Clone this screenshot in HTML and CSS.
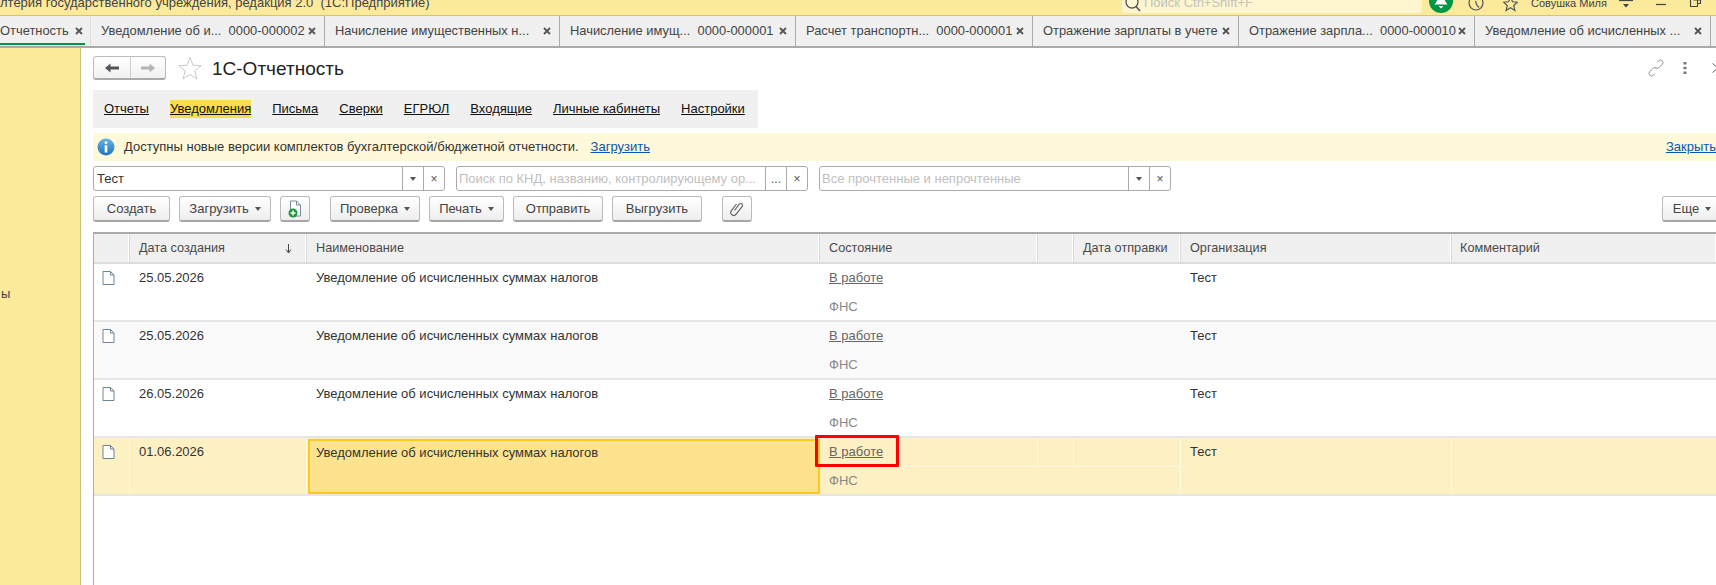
FILE: index.html
```html
<!DOCTYPE html>
<html lang="ru">
<head>
<meta charset="utf-8">
<title>1С-Отчетность</title>
<link rel="stylesheet" href="styles.css">
</head>
<body>
<div class="app">
  <header class="topbar">
    <div class="app-title">лтерия государственного учреждения, редакция 2.0&nbsp; (1С:Предприятие)</div>
    <div class="search">
      <svg class="search-ico" width="18" height="14" viewBox="0 0 18 14"><circle cx="7" cy="2" r="6" fill="none" stroke="#555" stroke-width="1.3"/><path d="M11 6.5l4 4.5" stroke="#555" stroke-width="1.6"/></svg>
      <span>Поиск Ctrl+Shift+F</span>
    </div>
    <svg class="bell" width="24" height="13" viewBox="0 0 24 13"><circle cx="12" cy="1" r="12" fill="#009646"/><path d="M12 -3c3 0 3.5 2 4 4l2.500 3.500h-13l2.500-3.500c.5-2 1-4 4-4z" fill="#fff"/><path d="M9.500 6h5l-2.500 2.500z" fill="#fff"/></svg>
    <svg class="clock" width="16" height="13" viewBox="0 0 16 13"><circle cx="8" cy="3" r="7" fill="none" stroke="#555" stroke-width="1.200"/><path d="M7.500 1l1.500 4.500 2 2" fill="none" stroke="#555" stroke-width="1.200"/></svg>
    <svg class="tstar" width="15" height="12" viewBox="0 0 15 12"><path d="M7.500-3l2 4.800 5 .4-3.800 3.300 1.200 5-4.400-2.700-4.400 2.700 1.200-5L.5 2.200l5-.4z" fill="none" stroke="#555" stroke-width="1.200"/></svg>
    <div class="user">Совушка Миля</div>
    <svg class="umenu" width="16" height="8" viewBox="0 0 16 8"><path d="M1 .5h14" stroke="#444" stroke-width="1.200"/><path d="M5 4h6L8 7.500z" fill="#444"/></svg>
    <svg class="mini" width="12" height="6" viewBox="0 0 12 6"><path d="M1 4.500h10" stroke="#444" stroke-width="1.200"/></svg>
    <svg class="rest" width="13" height="8" viewBox="0 0 13 8"><path d="M1.500 0v6.500h7V0M4.500 0h7v3.500H8.500" fill="none" stroke="#444" stroke-width="1.100"/></svg>
  </header>

  <nav class="tabs">
    <div class="tab tab-active t1"><span>Отчетность</span><svg class="x" width="8" height="8" viewBox="0 0 8 8"><path d="M1 1l6 6M7 1L1 7"/></svg></div>
    <div class="tab t2"><span>Уведомление об и...&nbsp; 0000-000002</span><svg class="x" width="8" height="8" viewBox="0 0 8 8"><path d="M1 1l6 6M7 1L1 7"/></svg></div>
    <div class="tab t3"><span>Начисление имущественных н...</span><svg class="x" width="8" height="8" viewBox="0 0 8 8"><path d="M1 1l6 6M7 1L1 7"/></svg></div>
    <div class="tab t4"><span>Начисление имущ...&nbsp; 0000-000001</span><svg class="x" width="8" height="8" viewBox="0 0 8 8"><path d="M1 1l6 6M7 1L1 7"/></svg></div>
    <div class="tab t5"><span>Расчет транспортн...&nbsp; 0000-000001</span><svg class="x" width="8" height="8" viewBox="0 0 8 8"><path d="M1 1l6 6M7 1L1 7"/></svg></div>
    <div class="tab t6"><span>Отражение зарплаты в учете</span><svg class="x" width="8" height="8" viewBox="0 0 8 8"><path d="M1 1l6 6M7 1L1 7"/></svg></div>
    <div class="tab t7"><span>Отражение зарпла...&nbsp; 0000-000010</span><svg class="x" width="8" height="8" viewBox="0 0 8 8"><path d="M1 1l6 6M7 1L1 7"/></svg></div>
    <div class="tab t8"><span>Уведомление об исчисленных ...</span><svg class="x" width="8" height="8" viewBox="0 0 8 8"><path d="M1 1l6 6M7 1L1 7"/></svg></div>
  </nav>

  <div class="main">
    <aside class="side"><span class="side-item">ы</span></aside>
    <section class="content">
      <div class="head">
        <div class="navbtns">
          <button class="navbtn"><svg width="14" height="10" viewBox="0 0 14 10"><path d="M0 5l5.500-4.500V3.500H14v3H5.500v3z" fill="#555"/></svg></button>
          <button class="navbtn"><svg width="14" height="10" viewBox="0 0 14 10"><path d="M14 5L8.500.5V3.500H0v3h8.500v3z" fill="#b4b4b4"/></svg></button>
        </div>
        <svg class="star" width="24" height="24" viewBox="0 0 24 24"><path d="M12 1.500l3 7.700 8.200.5-6.400 5.200 2.100 8L12 18.500 5.100 22.900l2.100-8L.8 9.700 9 9.200z" fill="none" stroke="#c8c8c8"/></svg>
        <h1 class="title">1С-Отчетность</h1>
        <div class="head-tools">
          <svg width="16" height="18" viewBox="0 0 17 20"><path d="M10 3.500l1.500-1.500a2.800 2.800 0 0 1 4 4l-3.500 3.500a2.800 2.800 0 0 1-4 0M7 16.500L5.500 18a2.800 2.800 0 0 1-4-4L5 10.500a2.800 2.800 0 0 1 4 0" fill="none" stroke="#888" stroke-width="1"/></svg>
          <svg class="dots" width="4" height="12" viewBox="0 0 4 12"><path d="M.5 0h3v2.500h-3zM.5 4.700h3v2.500h-3zM.5 9.400h3v2.500h-3z" fill="#777"/></svg>
          <svg class="chev" width="6" height="10" viewBox="0 0 6 10"><path d="M.5.500L6 5 .5 9.500" fill="none" stroke="#666"/></svg>
        </div>
      </div>

      <div class="menu">
        <a class="menu-item">Отчеты</a>
        <a class="menu-item menu-on">Уведомления</a>
        <a class="menu-item">Письма</a>
        <a class="menu-item">Сверки</a>
        <a class="menu-item">ЕГРЮЛ</a>
        <a class="menu-item">Входящие</a>
        <a class="menu-item">Личные кабинеты</a>
        <a class="menu-item">Настройки</a>
      </div>

      <div class="notice">
        <svg class="info" width="18" height="18" viewBox="0 0 18 18"><defs><linearGradient id="ig" x1="0" y1="0" x2="0" y2="1"><stop offset="0" stop-color="#6cb2e4"/><stop offset="1" stop-color="#1f74bb"/></linearGradient></defs><circle cx="9" cy="9" r="8.500" fill="url(#ig)"/><path d="M7.700 3.500h2.600v2.300H7.700zM7.700 7.200h2.600v7.300H7.700z" fill="#fff"/></svg>
        <span class="notice-text">Доступны новые версии комплектов бухгалтерской/бюджетной отчетности.</span>
        <a class="blue-link load">Загрузить</a>
        <a class="blue-link close">Закрыть</a>
      </div>

      <div class="filters">
        <div class="field"><span class="val">Тест</span><span class="fbtn"><i class="tri"></i></span><span class="fbtn">×</span></div>
        <div class="field"><span class="val ph">Поиск по КНД, названию, контролирующему ор...</span><span class="fbtn">...</span><span class="fbtn">×</span></div>
        <div class="field"><span class="val ph">Все прочтенные и непрочтенные</span><span class="fbtn"><i class="tri"></i></span><span class="fbtn">×</span></div>
      </div>

      <div class="toolbar">
        <button class="btn b-create">Создать</button>
        <button class="btn b-load">Загрузить<i class="tri tri-btn"></i></button>
        <button class="btn b-ico"><svg width="14" height="18" viewBox="0 0 14 18"><path d="M2.500 1h6l4 4v11h-10z" fill="#fff" stroke="#7d8c98"/><path d="M8.500 1v4h4" fill="none" stroke="#7d8c98"/><circle cx="5" cy="13" r="4.500" fill="#1d9a3f"/><path d="M5 10.500v5M2.500 13h5" stroke="#fff" stroke-width="1.500"/></svg></button>
        <button class="btn b-check gap-l">Проверка<i class="tri tri-btn"></i></button>
        <button class="btn b-print">Печать<i class="tri tri-btn"></i></button>
        <button class="btn b-send">Отправить</button>
        <button class="btn b-export">Выгрузить</button>
        <button class="btn b-ico gap-l"><svg width="14" height="16" viewBox="0 0 14 16"><path d="M4.500 9.500l4.800-6.300a1.800 1.800 0 0 1 2.900 2.200L6.200 13.200a3 3 0 0 1-4.800-3.600L6.500 3" fill="none" stroke="#666" stroke-width="1.200"/></svg></button>
        <button class="btn b-more">Еще<i class="tri tri-btn"></i></button>
      </div>

      <div class="table">
        <div class="row row-head">
          <div class="c"></div>
          <div class="c c-sort">Дата создания<svg width="7" height="10" viewBox="0 0 7 10"><path d="M3.500 0v8M1 5.500l2.500 3.500L6 5.500" fill="none" stroke="#444"/></svg></div>
          <div class="c">Наименование</div>
          <div class="c">Состояние</div>
          <div class="c"></div>
          <div class="c">Дата отправки</div>
          <div class="c">Организация</div>
          <div class="c">Комментарий</div>
        </div>

        <div class="row">
          <div class="c c-ico"><svg width="13" height="14" viewBox="0 0 13 14"><path d="M1 .5h7.500l3.500 3.500v9.500H1zM8.500.5V4H12" fill="#fff" stroke="#6f8597"/></svg></div>
          <div class="c">25.05.2026</div>
          <div class="c">Уведомление об исчисленных суммах налогов</div>
          <div class="state"><a class="st-link">В работе</a><span></span><span></span><div class="st-sub">ФНС</div></div>
          <div class="c">Тест</div>
          <div class="c"></div>
        </div>

        <div class="row row-alt">
          <div class="c c-ico"><svg width="13" height="14" viewBox="0 0 13 14"><path d="M1 .5h7.500l3.500 3.500v9.500H1zM8.500.5V4H12" fill="#fff" stroke="#6f8597"/></svg></div>
          <div class="c">25.05.2026</div>
          <div class="c">Уведомление об исчисленных суммах налогов</div>
          <div class="state"><a class="st-link">В работе</a><span></span><span></span><div class="st-sub">ФНС</div></div>
          <div class="c">Тест</div>
          <div class="c"></div>
        </div>

        <div class="row">
          <div class="c c-ico"><svg width="13" height="14" viewBox="0 0 13 14"><path d="M1 .5h7.500l3.500 3.500v9.500H1zM8.500.5V4H12" fill="#fff" stroke="#6f8597"/></svg></div>
          <div class="c">26.05.2026</div>
          <div class="c">Уведомление об исчисленных суммах налогов</div>
          <div class="state"><a class="st-link">В работе</a><span></span><span></span><div class="st-sub">ФНС</div></div>
          <div class="c">Тест</div>
          <div class="c"></div>
        </div>

        <div class="row row-sel">
          <div class="c c-ico"><svg width="13" height="14" viewBox="0 0 13 14"><path d="M1 .5h7.500l3.500 3.500v9.500H1zM8.500.5V4H12" fill="#fff" stroke="#6f8597"/></svg></div>
          <div class="c">01.06.2026</div>
          <div class="c c-cur">Уведомление об исчисленных суммах налогов</div>
          <div class="state"><a class="st-link">В работе</a><span></span><span></span><div class="st-sub">ФНС</div><div class="redbox"></div></div>
          <div class="c">Тест</div>
          <div class="c"></div>
        </div>
      </div>
    </section>
  </div>
</div>
</body>
</html>
```

FILE: styles.css
```css
* { box-sizing: border-box; }
html, body { margin: 0; padding: 0; }
body {
  width: 1716px;
  height: 585px;
  overflow: hidden;
  background: #fff;
  color: #333;
  font: 13px/16px "Liberation Sans", Arial, sans-serif;
}
button { font: inherit; color: inherit; }
svg { display: block; flex: none; }

.app { display: flex; flex-direction: column; height: 585px; overflow: hidden; }

/* top bar */
.topbar {
  flex: none;
  height: 16px;
  background: #fbe99c;
  border-bottom: 1px solid #d6c56f;
  display: flex;
  align-items: flex-start;
  overflow: hidden;
}
.app-title { width: 1122px; margin-top: -5px; white-space: nowrap; color: #444; }
.search {
  width: 300px;
  height: 13px;
  background: #fdf6d0;
  border-radius: 0 0 3px 3px;
  display: flex;
  color: #c2c2bb;
  overflow: hidden;
}
.search-ico { margin-left: 3px; margin-right: 1px; }
.search span { margin-top: -5px; white-space: nowrap; }
.bell { margin-left: 7px; }
.clock { margin-left: 15px; }
.tstar { margin-left: 19px; }
.user { width: 87px; margin-left: 13px; margin-top: -5px; font-size: 11px; color: #444; white-space: nowrap; }
.umenu { margin-top: 0; }
.mini { margin-left: 21px; }
.rest { margin-left: 22px; }

/* tabs */
.tabs {
  flex: none;
  height: 32px;
  background: #f0f0f0;
  border-bottom: 2px solid #aaa;
  display: flex;
  font-size: 12.9px;
}
.tab {
  flex: none;
  height: 30px;
  padding: 0 8px 0 10px;
  border-right: 1px solid #aaa;
  display: flex;
  align-items: center;
  justify-content: space-between;
  white-space: nowrap;
  color: #444;
}
.x { fill: none; stroke: #555; stroke-width: 1.8; }
.t1 { width: 91px; padding: 0 7px 0 0; border-right-color: #ddd; position: relative; }
.t2 { width: 234px; }
.t3 { width: 235px; }
.t4 { width: 236px; }
.t5 { width: 237px; }
.t6 { width: 206px; }
.t7 { width: 236px; }
.t8 { width: 236px; }
.tab-active::after {
  content: "";
  position: absolute;
  left: 0;
  right: 5px;
  bottom: 1px;
  height: 2px;
  background: #009646;
}

/* main */
.main { flex: 1; display: flex; min-height: 0; }
.side {
  flex: none;
  width: 81px;
  background: #fbe99c;
  border-right: 1px solid #c9bd80;
  padding: 238px 0 0 1px;
}
.side-item { color: #444; }
.content { flex: 1; min-width: 0; padding: 8px 0 0 12px; display: flex; flex-direction: column; }

.head { flex: none; height: 24px; display: flex; align-items: center; }
.navbtns {
  width: 73px;
  height: 24px;
  display: flex;
  border: 1px solid #bbb;
  border-bottom: 2px solid #aaa;
  border-radius: 3px;
  background: linear-gradient(#fff, #f1f1f1);
}
.navbtn {
  width: 36px;
  padding: 0;
  border: 0;
  background: none;
  display: flex;
  align-items: center;
  justify-content: center;
}
.navbtn + .navbtn { border-left: 1px solid #ccc; }
.star { margin-left: 12px; }
.title { margin: 2px 0 0 10px; font-size: 19px; font-weight: 400; line-height: 24px; color: #222; }
.head-tools { margin-left: auto; display: flex; align-items: center; }
.dots { margin-left: 19px; }
.chev { margin-left: 25px; margin-right: -2px; }

.menu {
  flex: none;
  width: 665px;
  height: 38px;
  margin-top: 10px;
  background: #f0f0f0;
  padding: 0 11px;
  display: flex;
  align-items: center;
  gap: 21px;
}
.menu-item { color: #111; text-decoration: underline; white-space: nowrap; }
.menu-on { background: #fbdc4d; line-height: 18px; }

.notice {
  flex: none;
  height: 28px;
  margin-top: 5px;
  background: #fef9d8;
  display: flex;
  align-items: center;
  padding-left: 4px;
}
.notice-text { margin-left: 9px; color: #333; white-space: nowrap; }
.blue-link { color: #0b55b0; text-decoration: underline; white-space: nowrap; }
.load { margin-left: 12px; }
.close { margin-left: auto; }

.filters { flex: none; height: 25px; margin-top: 5px; display: flex; gap: 11px; }
.field {
  width: 352px;
  height: 25px;
  border: 1px solid #aaa;
  border-radius: 3px;
  background: #fff;
  display: flex;
  align-items: center;
}
.val { flex: 1; min-width: 0; padding-left: 3px; white-space: nowrap; overflow: hidden; color: #333; }
.ph { color: #c0c0c0; padding-left: 2px; }
.fbtn {
  flex: none;
  width: 21px;
  height: 23px;
  border-left: 1px solid #aaa;
  display: flex;
  align-items: center;
  justify-content: center;
  color: #555;
  font-size: 12px;
}
.tri {
  display: block;
  width: 0;
  height: 0;
  border: 3px solid transparent;
  border-top: 4px solid #555;
  border-bottom: 0;
}
.tri-btn { margin-left: 6px; }

.toolbar { flex: none; height: 26px; margin-top: 5px; display: flex; gap: 9px; }
.btn {
  height: 26px;
  padding: 0;
  border: 1px solid #bbb;
  border-bottom: 2px solid #a6a6a6;
  border-radius: 3px;
  background: linear-gradient(#fff, #eeeeee);
  display: flex;
  align-items: center;
  justify-content: center;
  white-space: nowrap;
  color: #444;
}
.gap-l { margin-left: 11px; }
.b-create { width: 77px; }
.b-load { width: 92px; }
.b-ico { width: 30px; }
.b-check { width: 90px; }
.b-print { width: 75px; }
.b-send { width: 90px; }
.b-export { width: 90px; }
.b-more { width: 60px; margin-left: auto; margin-right: -6px; }

.table {
  flex: 1;
  min-height: 0;
  margin-top: 10px;
  border-top: 2px solid #aaa;
  border-left: 1px solid #aaa;
}
.row {
  display: grid;
  grid-template-columns: 36px 177px 513px 361px 271px 265px;
  height: 58px;
  border-bottom: 2px solid #e6e6e6;
  color: #333;
}
.row-alt { background: #fafafa; }
.c { padding: 6px 0 0 9px; white-space: nowrap; min-width: 0; }
.c-ico { padding: 7px 0 0 8px; }

.row-head {
  grid-template-columns: 36px 177px 513px 218px 36px 107px 271px 265px;
  height: 30px;
  background: #f0f0f0;
  border-bottom: 2px solid #dcdcdc;
  color: #4a4a4a;
  font-size: 12.7px;
}
.row-head .c { padding: 6px 0 0 9px; border-right: 1px solid #dadada; box-shadow: inset -1px 0 0 #fff; }
.row-head .c:last-child { padding-left: 8px; }
.c-sort { display: flex; justify-content: space-between; padding-right: 14px !important; }
.c-sort svg { margin-top: 4px; }

.state {
  display: grid;
  grid-template-columns: 218px 36px 107px;
  grid-template-rows: 29px 27px;
  position: relative;
}
.st-link { padding: 6px 0 0 9px; color: #666; text-decoration: underline; }
.st-sub { grid-column: 1 / 4; padding: 6px 0 0 9px; color: #888; }

.row-sel { background: #fdf0c2; }
.row-sel .c { border-right: 1px solid #fff8e0; }
.row-sel .c:last-child { border-right: 0; }
.row-sel .state { border-right: 1px solid #fff8e0; }
.row-sel .state > span,
.row-sel .st-link { border-right: 1px solid #fff8e0; border-bottom: 1px solid #fff8e0; }
.c-cur {
  background: #fde38e;
  border: 2px solid #fdc91f !important;
  padding: 4px 0 0 6px;
  margin: 1px 0 -1px 1px;
  height: 55px;
}
.redbox {
  position: absolute;
  left: -5px;
  top: -3px;
  width: 84px;
  height: 32px;
  border: 3px solid #f00;
  border-radius: 1px;
}
```
